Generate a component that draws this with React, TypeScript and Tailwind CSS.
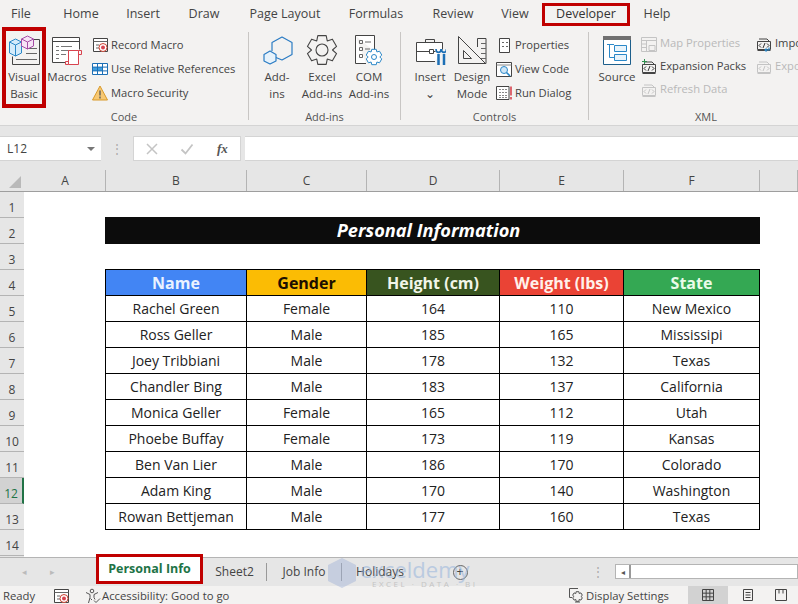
import { ReactNode } from "react";

const uiFont = "font-['Open_Sans',sans-serif]";

const tabs = ["File", "Home", "Insert", "Draw", "Page Layout", "Formulas", "Review", "View", "Developer", "Help"];
const tabWidths = ["w-[48px] pr-[6px]", "w-[66px]", "w-[58px]", "w-[64px]", "w-[98px]", "w-[84px]", "w-[70px]", "w-[54px]", "w-[88px]", "w-[54px]"];

const columns = [
  { label: "A", width: "w-[81px]" },
  { label: "B", width: "w-[141px]" },
  { label: "C", width: "w-[120px]" },
  { label: "D", width: "w-[133px]" },
  { label: "E", width: "w-[124px]" },
  { label: "F", width: "w-[136px]" },
  { label: "", width: "w-[38px]" },
];

const people = [
  ["Rachel Green", "Female", "164", "110", "New Mexico"],
  ["Ross Geller", "Male", "185", "165", "Mississipi"],
  ["Joey Tribbiani", "Male", "178", "132", "Texas"],
  ["Chandler Bing", "Male", "183", "137", "California"],
  ["Monica Geller", "Female", "165", "112", "Utah"],
  ["Phoebe Buffay", "Female", "173", "119", "Kansas"],
  ["Ben Van Lier", "Male", "186", "170", "Colorado"],
  ["Adam King", "Male", "170", "140", "Washington"],
  ["Rowan Bettjeman", "Male", "177", "160", "Texas"],
];

const headers = [
  { text: "Name", cls: "w-[141px] bg-[#4285f4] text-[#eaf2ff]" },
  { text: "Gender", cls: "w-[120px] bg-[#fbbc04] text-[#1c0f00]" },
  { text: "Height (cm)", cls: "w-[133px] bg-[#38541f] text-[#f1f5e8]" },
  { text: "Weight (lbs)", cls: "w-[124px] bg-[#ea4335] text-[#fff0ea]" },
  { text: "State", cls: "w-[136px] bg-[#34a853] text-[#eafbe9]" },
];

const bodyWidths = ["w-[141px]", "w-[120px]", "w-[133px]", "w-[124px]", "w-[136px]"];

// outline of a cog, used by the two add-in icons
const gearPath = (cx: number, cy: number, ro: number, ri: number, teeth: number) => {
  const pts: string[] = [];
  const step = (Math.PI * 2) / teeth;
  for (let i = 0; i < teeth; i++) {
    const a = i * step - Math.PI / 2;
    [
      [ri, -0.5],
      [ro, -0.27],
      [ro, 0.27],
      [ri, 0.5],
    ].forEach(([r, k]) => {
      const t = a + k * step;
      pts.push(`${(cx + r * Math.cos(t)).toFixed(2)} ${(cy + r * Math.sin(t)).toFixed(2)}`);
    });
  }
  return `M${pts.join("L")}Z`;
};

const Svg = ({ size, children }: { size: number; children: ReactNode }) => (
  <svg width={size} height={size} viewBox={size === 32 ? "0 0 32 32" : "0 0 16 16"} fill="none" className="shrink-0">
    {children}
  </svg>
);

const VisualBasicIcon = () => (
  <Svg size={32}>
    <path d="M26 5.500h5.500v25H4.500v-8" stroke="#444" />
    <path d="M18 14.500h11M18 19.500h11M8 25.500h21" stroke="#666" />
    <path d="M1.500 8l6-3 6 3v11l-6 3-6-3z" fill="#d4ebfa" stroke="#2b88c8" />
    <path d="M1.500 8l6 3 6-3M7.500 11v11" stroke="#2b88c8" />
    <path d="M13.500 5l6-3 6 3v7l-6 3-6-3z" fill="#f6e3f6" stroke="#a64ca6" />
    <path d="M13.500 5l6 3 6-3M19.500 8v7" stroke="#a64ca6" />
  </Svg>
);

const MacrosIcon = () => (
  <Svg size={32}>
    <path d="M1.500 3.500h27v25h-27" fill="#fff" />
    <path d="M1.500 3.500h27M1.500 7.500h27M1.500 3.500v25h13M28.500 3.500v12" stroke="#444" />
    <path d="M5 12.500h3M10 12.500h11M5 16.500h3M10 16.500h8M5 20.500h3M10 20.500h5M5 24.500h3" stroke="#777" />
    <path d="M17.500 16.500h10v14h-10z" fill="#fff" stroke="#d8434e" />
    <path d="M27.500 16.500h3v4h-3M17.500 30.500h-3v-3h3" stroke="#d8434e" />
  </Svg>
);

const RecordIcon = () => (
  <Svg size={16}>
    <path d="M1.500 1.500h14v13h-14z" fill="#fff" stroke="#444" />
    <path d="M1.500 4.500h14M4 8h3M4 11h3" stroke="#666" />
    <circle cx="11" cy="10.500" r="4" fill="#fff" stroke="#c43" />
    <circle cx="11" cy="10.500" r="2" fill="#d8434e" />
  </Svg>
);

const RelativeIcon = () => (
  <Svg size={16}>
    <path d="M.5 2.500h15v11H.5z" fill="#fff" stroke="#1d6fb5" />
    <path d="M1 6h10v4H1z" fill="#3f9fe0" />
    <path d="M5.500 2.500v11M10.500 2.500v11M.5 6.100h15M.5 9.900h15" stroke="#1d6fb5" />
  </Svg>
);

const WarningIcon = () => (
  <Svg size={16}>
    <path d="M8 1l7.500 14H.5z" fill="#f7c873" stroke="#d99a2b" />
    <path d="M8 5.500v5M8 11.500v2" stroke="#555" strokeWidth="1.300" />
  </Svg>
);

const AddInsIcon = () => (
  <Svg size={32}>
    <path d="M15 23.500l6 2.500 10-5.500V8.500L21 3l-10 5.500V17" stroke="#2b7cc4" strokeWidth="1.200" strokeLinejoin="round" />
    <path d="M9 17l6 3.500v6.500l-6 3-6-3v-6.500z" fill="#e6f2fb" stroke="#2b7cc4" strokeWidth="1.200" strokeLinejoin="round" />
  </Svg>
);

const GearIcon = () => (
  <Svg size={32}>
    <path d={gearPath(16, 16, 15, 10.500, 6)} stroke="#444" strokeWidth="1.100" strokeLinejoin="round" />
    <circle cx="16" cy="16" r="6" stroke="#444" strokeWidth="1.100" />
  </Svg>
);

const ComIcon = () => (
  <Svg size={32}>
    <path d="M2.500 1.500h19v16M13 29.500H2.500v-28" fill="#fff" stroke="#444" />
    <path d="M6.500 6.500h3v3h-3zM6.500 13.500h3v3h-3zM6.500 20.500h3v3h-3z" stroke="#666" />
    <path d="M12 8h6M12 15h5" stroke="#666" />
    <path d={gearPath(21, 23, 8, 5.800, 6)} fill="#fff" stroke="#2b88c8" strokeLinejoin="round" />
    <circle cx="21" cy="23" r="2.500" stroke="#2b88c8" />
  </Svg>
);

const InsertIcon = () => (
  <Svg size={32}>
    <path d="M21 27.500H2.500v-19h26v7" fill="#fff" stroke="#444" />
    <path d="M11.500 8.500v-3h9v3M2.500 17.500h13M19.500 17.500h2" stroke="#444" />
    <path d="M15.500 15.500h4v4h-4z" stroke="#444" />
    <path d="M24.500 20v11M30 20v11" stroke="#1d6fb5" strokeWidth="2.500" />
    <path d="M22 15c0 4.500 5 4.500 5 0M27.500 15c0 4.500 5 4.500 5 0" stroke="#1d6fb5" strokeWidth="1.600" />
  </Svg>
);

const DesignIcon = () => (
  <Svg size={32}>
    <path d="M21.500 13V4.500h8.500v25h-8" stroke="#444" />
    <path d="M25 9.500h5M25 14.500h5M25 19.500h5M25 24.500h5" stroke="#666" />
    <path d="M2.500 2.500l27 27h-27z" stroke="#444" />
    <path d="M7.500 16.500l8 8h-8z" stroke="#444" />
  </Svg>
);

const PropertiesIcon = () => (
  <Svg size={16}>
    <path d="M3.500 1.500h10v14h-10z" fill="#fff" stroke="#444" />
    <path d="M6 5.500h2M10 5.500h2M6 9.500h2M10 9.500h2" stroke="#666" />
  </Svg>
);

const ViewCodeIcon = () => (
  <Svg size={16}>
    <path d="M.5 1.500h15v14H.5z" fill="#fff" stroke="#444" />
    <path d="M.5 4h15" stroke="#888" />
    <circle cx="8" cy="9" r="3.500" fill="#cfe6f7" stroke="#2b88c8" />
    <path d="M10.500 11.500l3.500 3.500" stroke="#2b88c8" strokeWidth="1.600" />
  </Svg>
);

const RunDialogIcon = () => (
  <Svg size={16}>
    <path d="M.5 1.500h12.500v13H.5z" fill="#fff" stroke="#444" />
    <path d="M3 4.500h8M3 7.500h8M3 10.500h8M3 12.500h8" stroke="#888" strokeDasharray="2 1" />
    <path d="M15 1.500v9M15 12v2.500" stroke="#d8434e" strokeWidth="1.600" />
  </Svg>
);

const SourceIcon = () => (
  <Svg size={32}>
    <path d="M2.500 2.500h27v28h-27z" fill="#fff" stroke="#1d5f8c" />
    <path d="M2 2h28v4H2z" fill="#707070" />
    <path d="M13.500 11.500h12v6h-12zM13.500 20.500h12v6h-12z" fill="#e9f4fb" stroke="#2b88c8" />
    <path d="M6 10.500h7M8.500 10.500v13h5" stroke="#2b88c8" />
  </Svg>
);

const MapPropsIcon = () => (
  <Svg size={16}>
    <path d="M.5 1.500h15v14H.5z" fill="#f3f2f1" stroke="#c4c4c4" />
    <path d="M.5 4.500h15M5.500 4.500v11M.5 8h5M.5 11.500h5M8 9.500h6v5H8z" stroke="#c4c4c4" />
  </Svg>
);

const XmlIcon = ({ faded, plus, arrow }: { faded?: boolean; plus?: boolean; arrow?: boolean }) => {
  const c = faded ? "#c4c4c4" : "#444";
  return (
    <Svg size={16}>
      <path d="M3 3h8l2 2" stroke={c} />
      <path d="M1.500 5.500h13v8h-13z" fill="#f3f2f1" stroke={c} />
      <path d="M1.500 14.500h13" stroke={c} />
      <path d="M5 7.500l-2 2 2 2M11 7.500l2 2-2 2M9 7l-2 5" stroke={faded ? "#c4c4c4" : "#333"} />
      {plus && <path d="M3.500 0v5M1 2.500h5" stroke="#2f8f4e" />}
      {arrow && <path d="M13 11.500v2.500H9M10.500 12.500L9 14l1.500 1.500" stroke="#2b88c8" strokeWidth="1.200" />}
    </Svg>
  );
};

const BigButton = ({ icon, lines, cls }: { icon: ReactNode; lines: string[]; cls: string }) => (
  <div className={`flex flex-col items-center shrink-0 text-[11.5px] leading-[17px] text-[#444] ${cls}`}>
    <div className="h-[35px] flex items-center">{icon}</div>
    <div className="mt-[1px] flex flex-col items-center whitespace-nowrap">
      {lines.map((line) => (
        <div key={line}>{line}</div>
      ))}
    </div>
  </div>
);

const SmallButton = ({ icon, label, faded, h = "h-[24px]" }: { icon: ReactNode; label: string; faded?: boolean; h?: string }) => (
  <div className={`${h} flex items-center gap-[3px] whitespace-nowrap text-[11.2px] ${faded ? "text-[#b9b9b9]" : "text-[#444]"}`}>
    {icon}
    <span>{label}</span>
  </div>
);

const Group = ({ label, width, children }: { label: string; width: string; children: ReactNode }) => (
  <div className={`shrink-0 h-full flex ${width}`}>
    <div className="flex-1 min-w-0 flex flex-col">
      <div className="flex-1 flex min-h-0 pt-[5px]">{children}</div>
      <div className="h-[17px] text-center text-[11px] leading-[18px] text-[#555]">{label}</div>
    </div>
    <div className="w-px my-[5px] bg-[#c8c6c4]" />
  </div>
);

const App = () => {
  return (
    <div className={`w-[798px] h-[604px] overflow-hidden flex flex-col bg-white ${uiFont}`}>
      {/* tab strip */}
      <div className="h-[27px] pt-[2px] flex items-center bg-[#f3f2f1] text-[12.5px] text-[#444]">
        {tabs.map((tab, i) => (
          <div key={tab} className={`${tabWidths[i]} h-full flex items-center justify-center`}>
            {tab === "Developer" ? (
              <div className="h-[23px] w-[88px] border-[3px] border-[#c00000] flex items-center justify-center text-[#333]">{tab}</div>
            ) : (
              tab
            )}
          </div>
        ))}
      </div>

      {/* ribbon */}
      <div className="h-[98px] flex bg-[#f3f2f1] overflow-hidden">
        <Group label="Code" width="w-[249px]">
          <div className="h-[81px] w-[44px] -mt-[5px] border-[4px] border-[#c00000] shrink-0 ml-[2px] flex flex-col items-center text-[11.5px] leading-[17px] text-[#444]">
            <div className="h-[37px] flex items-center"><VisualBasicIcon /></div>
            <div>Visual</div>
            <div>Basic</div>
          </div>
          <BigButton icon={<MacrosIcon />} lines={["Macros"]} cls="w-[42px]" />
          <div className="flex flex-col ml-[4px] mt-[1px]">
            <SmallButton icon={<RecordIcon />} label="Record Macro" />
            <SmallButton icon={<RelativeIcon />} label="Use Relative References" />
            <SmallButton icon={<WarningIcon />} label="Macro Security" />
          </div>
        </Group>
        <Group label="Add-ins" width="w-[152px]">
          <BigButton icon={<AddInsIcon />} lines={["Add-", "ins"]} cls="w-[56px]" />
          <BigButton icon={<GearIcon />} lines={["Excel", "Add-ins"]} cls="w-[34px]" />
          <BigButton icon={<ComIcon />} lines={["COM", "Add-ins"]} cls="w-[60px]" />
        </Group>
        <Group label="Controls" width="w-[188px]">
          <BigButton icon={<InsertIcon />} lines={["Insert", "⌄"]} cls="w-[50px] ml-[4px]" />
          <BigButton icon={<DesignIcon />} lines={["Design", "Mode"]} cls="w-[34px]" />
          <div className="flex flex-col ml-[7px] mt-[1px]">
            <SmallButton icon={<PropertiesIcon />} label="Properties" />
            <SmallButton icon={<ViewCodeIcon />} label="View Code" />
            <SmallButton icon={<RunDialogIcon />} label="Run Dialog" />
          </div>
        </Group>
        <div className="flex-1 min-w-0 h-full flex flex-col overflow-hidden">
          <div className="flex-1 flex pt-[5px] min-h-0">
            <BigButton icon={<SourceIcon />} lines={["Source"]} cls="w-[48px] ml-[4px]" />
            <div className="flex flex-col w-[115px] shrink-0">
              <SmallButton icon={<MapPropsIcon />} label="Map Properties" faded h="h-[23px]" />
              <SmallButton icon={<XmlIcon plus />} label="Expansion Packs" h="h-[23px]" />
              <SmallButton icon={<XmlIcon faded />} label="Refresh Data" faded h="h-[23px]" />
            </div>
            <div className="flex flex-col shrink-0">
              <SmallButton icon={<XmlIcon arrow />} label="Import" h="h-[23px]" />
              <SmallButton icon={<XmlIcon faded />} label="Export" faded h="h-[23px]" />
            </div>
          </div>
          <div className="h-[17px] w-[234px] text-center text-[11px] leading-[18px] text-[#555]">XML</div>
        </div>
      </div>

      <div className="h-[10px] bg-[#e6e6e6] border-t border-[#d4d4d4]" />

      {/* formula bar */}
      <div className="h-[27px] flex items-center bg-[#e6e6e6] text-[12px] text-[#444]">
        <div className="w-[101px] h-[25px] bg-white flex items-center justify-between pl-[7px] pr-[6px] border-y border-[#d4d4d4]">
          <span>L12</span>
          <span className="w-0 h-0 border-x-[4px] border-x-transparent border-t-[4px] border-t-[#777]" />
        </div>
        <div className="w-[32px] text-center text-[#aaa]">⋮</div>
        <div className="w-[108px] h-[25px] bg-white flex items-center border border-[#d4d4d4]">
          <span className="w-[36px] flex justify-center">
            <Svg size={16}><path d="M3 3l10 10M13 3L3 13" stroke="#c4c4c4" strokeWidth="1.500" /></Svg>
          </span>
          <span className="w-[36px] flex justify-center">
            <Svg size={16}><path d="M2.500 8.500l4 4 7-9" stroke="#c4c4c4" strokeWidth="1.800" /></Svg>
          </span>
          <span className="w-[36px] text-center text-[#555] text-[13px] italic font-['Liberation_Serif',serif] font-bold">fx</span>
        </div>
        <div className="flex-1 h-[25px] ml-[4px] bg-white border-y border-[#d4d4d4]" />
      </div>

      {/* column headers */}
      <div className="h-[30px] flex bg-[#e6e6e6] border-b border-[#9e9e9e] pt-[8px] text-[12px] text-[#444]">
        <div className="w-[25px] h-[21px] flex items-end justify-end pr-[4px] pb-[3px]">
          <span className="w-0 h-0 border-l-[12px] border-l-transparent border-b-[12px] border-b-[#b9b9b9]" />
        </div>
        {columns.map((col) => (
          <div key={col.width + col.label} className={`${col.width} h-[21px] flex items-center justify-center border-r border-[#b4b4b4]`}>
            {col.label}
          </div>
        ))}
      </div>

      {/* sheet */}
      <div className="h-[365px] flex overflow-hidden">
        <div className="w-[24px] shrink-0 bg-[#e6e6e6] text-[12px] text-[#444]">
          {Array.from({ length: 14 }, (_, i) => i + 1).map((n) => (
            <div
              key={n}
              className={`h-[26px] pt-[7px] flex items-center justify-center border-b border-[#b4b4b4] ${
                n === 12 ? "border-r-2 border-r-[#217346] bg-[#d2d2d2] text-[#217346]" : ""
              }`}
            >
              {n}
            </div>
          ))}
        </div>
        <div className="flex-1 pl-[81px]">
          <div className="h-[25px]" />
          <div className="w-[655px] h-[27px] pr-[8px] bg-[#0c0c0c] flex items-center justify-center text-white text-[18.2px] font-bold italic">
            Personal Information
          </div>
          <div className="h-[25px]" />
          <div className="w-[655px] border-t border-l border-black">
            <div className="flex h-[26px]">
              {headers.map((h) => (
                <div key={h.text} className={`${h.cls} shrink-0 flex items-center justify-center text-[16px] font-bold border-r border-b border-black`}>
                  {h.text}
                </div>
              ))}
            </div>
            {people.map((row) => (
              <div key={row[0]} className="flex h-[26px]">
                {row.map((cell, i) => (
                  <div
                    key={i}
                    className={`${bodyWidths[i]} shrink-0 flex items-center justify-center text-[14px] text-[#222] border-r border-b border-black`}
                  >
                    {cell}
                  </div>
                ))}
              </div>
            ))}
          </div>
        </div>
      </div>

      {/* sheet tabs */}
      <div className="relative h-[29px] flex bg-[#e6e6e6] border-t border-[#b4b4b4] text-[12px] text-[#444]">
        <div className="w-[96px] pl-[10px] flex items-center text-[#bbb] text-[9px]">
          <span className="w-[28px] text-center">◂</span>
          <span className="w-[28px] text-center">▸</span>
        </div>
        <div className="relative z-10 w-[107px] h-[30px] -mt-[4px] bg-white border-[3px] border-[#c00000] flex items-center justify-center font-bold text-[12.5px] text-[#217346]">
          Personal Info
        </div>
        <div className="w-[63px] flex items-center justify-center">Sheet2</div>
        <div className="my-[5px] border-r border-[#999]" />
        <div className="w-[74px] flex items-center justify-center">Job Info</div>
        <div className="my-[5px] border-r border-[#999]" />
        <div className="w-[76px] flex items-center justify-center">Holidays</div>
        <div className="w-[33px]" />
        <div className="w-[18px] flex items-center justify-center">
          <span className="w-[15px] h-[15px] rounded-full border border-[#666] flex items-center justify-center text-[12px] leading-none">+</span>
        </div>
        <div className="w-[146px] pr-[11px] flex items-center justify-end text-[#aaa]">⋮</div>
        <div className="flex-1 h-[15px] mt-[6px] bg-white border border-[#b4b4b4] flex">
          <div className="w-[15px] border-r-2 border-[#999] flex items-center justify-center text-[8px] text-[#555]">◂</div>
        </div>
        {/* watermark */}
        <div className="absolute left-[328px] top-0 w-[142px] h-[32px] pointer-events-none">
          <svg width="30" height="30" viewBox="0 0 30 30" className="absolute left-0 top-0">
            <path d="M14 0l14 7v16l-14 7-14-7V7z" fill="#9fb2d6" opacity="0.45" />
          </svg>
          <span className="absolute left-[32px] -top-[3px] text-[22px] leading-[28px] text-[#8fb0dc] opacity-50">exceldemy</span>
          <span className="absolute left-[44px] top-[21px] text-[8px] leading-[10px] tracking-[2.500px] whitespace-nowrap text-[#c4c4c4]">EXCEL · DATA · BI</span>
        </div>
      </div>

      {/* status bar */}
      <div className="h-[18px] flex items-center bg-[#f3f2f1] text-[11.3px] text-[#444]">
        <span className="pl-[3px] pt-[3px] w-[53px]">Ready</span>
        <span className="w-[32px] pt-[1px]"><RecordIcon /></span>
        <span className="pt-[1px]">
          <Svg size={16}>
            <circle cx="7" cy="3" r="1.800" stroke="#555" />
            <path d="M1 4.500l4 2v3L3.500 15M13 4.500l-4 2v3l1 2M5.500 10.500L7 12" stroke="#555" />
            <path d="M9 12.500l2 2 4-4" stroke="#555" />
          </Svg>
        </span>
        <span className="pl-[1px] pt-[3px]">Accessibility: Good to go</span>
        <div className="ml-auto flex items-center h-full">
          <Svg size={16}>
            <path d="M10 1.500H1.500v9H4" stroke="#555" />
            <path d={gearPath(9.500, 9.500, 5, 3.400, 6)} stroke="#555" />
            <path d="M7 15h5" stroke="#555" />
          </Svg>
          <span className="pl-[2px] pt-[3px]">Display Settings</span>
          <span className="w-[40px] h-full ml-[19px] bg-[#d2d2d2] flex items-center justify-center">
            <Svg size={16}><path d="M2.500 2.500h11v11h-11zM6.170 2.500v11M9.830 2.500v11M2.500 6.170h11M2.500 9.830h11" stroke="#444" /></Svg>
          </span>
          <span className="w-[40px] flex items-center justify-center">
            <Svg size={16}><path d="M3.500 2.500h9v11h-9zM5.500 5.500h5M5.500 8h5M5.500 10.500h5" stroke="#444" /></Svg>
          </span>
          <span className="w-[30px] pr-[4px] flex items-center justify-center">
            <Svg size={16}><path d="M2.500 2.500h11v11h-11zM6 2.500v4M10 2.500v4" stroke="#444" /></Svg>
          </span>
        </div>
      </div>
    </div>
  );
};

export default App;
